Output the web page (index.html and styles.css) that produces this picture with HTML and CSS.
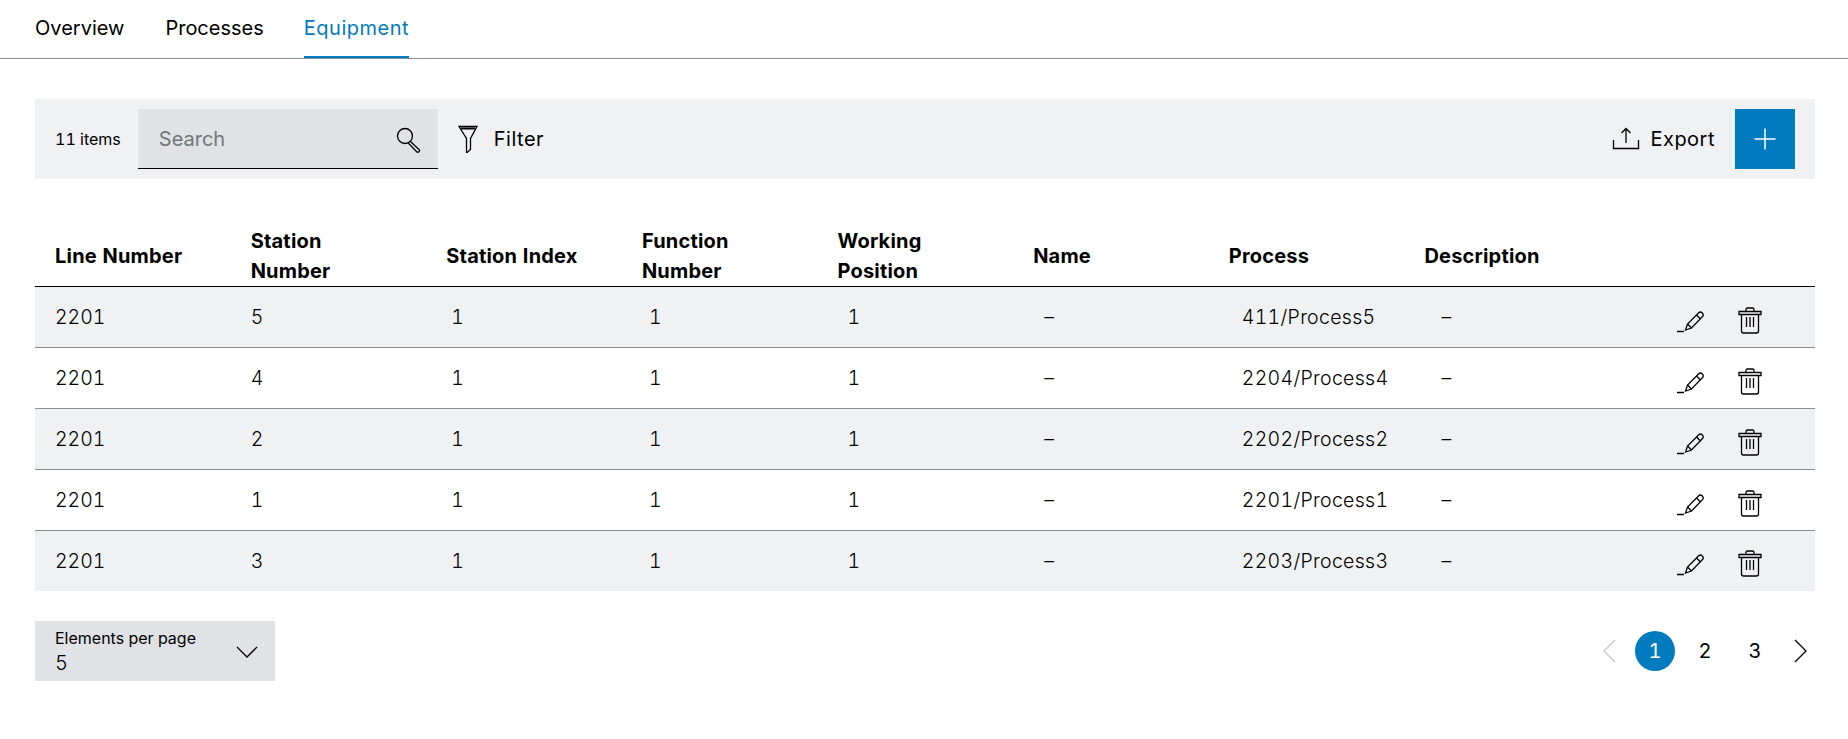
FILE: index.html
```html
<!DOCTYPE html>
<html lang="en">

<head>
    <meta charset="UTF-8">
    <meta name="viewport" content="width=device-width, initial-scale=1.0">
    <title>Equipment</title>
    <link rel="stylesheet" href="styles.css">
</head>

<body>
    <svg class="sprite">
        <symbol id="i-edit" viewBox="0 0 28 28"><path d="M1 25.500h7M9.500 24l2-6L22.500 7a2.300 2.300 0 0 1 3.800 3.800L15.500 22z"/><path d="M11.500 18l4 4M20.500 9l4 4"/></symbol>
        <symbol id="i-trash" viewBox="0 0 28 28"><path d="M3 5.500h22v3H3zM5.500 8.500V25a2 2 0 0 0 2 2h13a2 2 0 0 0 2-2V8.500M10 5.500V3.500a1.500 1.500 0 0 1 1.500-1.500h5a1.500 1.500 0 0 1 1.500 1.500v2M10.500 11v10M14 11v10M17.500 11v10"/></symbol>
    </svg>

    <nav class="tabs">
        <a class="tab">Overview</a>
        <a class="tab">Processes</a>
        <a class="tab tab-active">Equipment</a>
    </nav>

    <div class="content">
        <div class="toolbar">
            <span class="item-count">11 items</span>
            <div class="search">
                <span class="search-placeholder">Search</span>
                <svg class="icon" viewBox="0 0 28 28"><circle cx="11" cy="11" r="7.500"/><path d="M16.500 16.500l9 8.500a1.800 1.800 0 0 1-2.600 2l-8.700-9"/></svg>
            </div>
            <button class="tool-btn">
                <svg class="icon" viewBox="0 0 28 28"><path d="M5 1.500h18l-6.500 12v11l-4 3.500v-14.500z"/><path d="M7 3.500h14" stroke-width="2"/></svg>
                Filter
            </button>
            <button class="tool-btn tool-btn-right">
                <svg class="icon" viewBox="0 0 28 28"><path d="M1.500 15v8.500h25v-8.500"/><path d="M14 18v-14M9.500 8l4.500-4.500 4.500 4.500"/></svg>
                Export
            </button>
            <button class="add-btn">
                <svg class="icon icon-white" viewBox="0 0 28 28"><path d="M14 3.500v21M3.500 14h21"/></svg>
            </button>
        </div>

        <table class="equipment">
            <thead>
                <tr>
                    <th>Line Number</th>
                    <th>Station Number</th>
                    <th>Station Index</th>
                    <th>Function Number</th>
                    <th>Working Position</th>
                    <th>Name</th>
                    <th>Process</th>
                    <th>Description</th>
                    <th></th>
                </tr>
            </thead>
            <tbody>
                <tr>
                    <td>2201</td><td>5</td><td>1</td><td>1</td><td>1</td>
                    <td>–</td><td>411/Process5</td><td>–</td>
                    <td class="actions">
                        <svg class="icon"><use href="#i-edit"/></svg>
                        <svg class="icon"><use href="#i-trash"/></svg>
                    </td>
                </tr>
                <tr>
                    <td>2201</td><td>4</td><td>1</td><td>1</td><td>1</td>
                    <td>–</td><td>2204/Process4</td><td>–</td>
                    <td class="actions">
                        <svg class="icon"><use href="#i-edit"/></svg>
                        <svg class="icon"><use href="#i-trash"/></svg>
                    </td>
                </tr>
                <tr>
                    <td>2201</td><td>2</td><td>1</td><td>1</td><td>1</td>
                    <td>–</td><td>2202/Process2</td><td>–</td>
                    <td class="actions">
                        <svg class="icon"><use href="#i-edit"/></svg>
                        <svg class="icon"><use href="#i-trash"/></svg>
                    </td>
                </tr>
                <tr>
                    <td>2201</td><td>1</td><td>1</td><td>1</td><td>1</td>
                    <td>–</td><td>2201/Process1</td><td>–</td>
                    <td class="actions">
                        <svg class="icon"><use href="#i-edit"/></svg>
                        <svg class="icon"><use href="#i-trash"/></svg>
                    </td>
                </tr>
                <tr>
                    <td>2201</td><td>3</td><td>1</td><td>1</td><td>1</td>
                    <td>–</td><td>2203/Process3</td><td>–</td>
                    <td class="actions">
                        <svg class="icon"><use href="#i-edit"/></svg>
                        <svg class="icon"><use href="#i-trash"/></svg>
                    </td>
                </tr>
            </tbody>
        </table>

        <div class="footer">
            <div class="page-size">
                <div>
                    <div class="page-size-label">Elements per page</div>
                    <div class="page-size-value">5</div>
                </div>
                <svg class="icon" viewBox="0 0 28 28"><path d="M4 9l10 10 10-10"/></svg>
            </div>
            <div class="pagination">
                <svg class="icon icon-disabled" viewBox="0 0 28 28"><path d="M18 3L7 14l11 11"/></svg>
                <span class="page page-current">1</span>
                <span class="page">2</span>
                <span class="page">3</span>
                <svg class="icon" viewBox="0 0 28 28"><path d="M10 3l11 11-11 11"/></svg>
            </div>
        </div>
    </div>
</body>

</html>
```

FILE: styles.css
```css
body {
    font-family: Inter, "Liberation Sans", sans-serif;
    font-size: 20px;
    font-variant-numeric: tabular-nums;
    color: #000;
    background-color: #fff;
    margin: 0;
}

.sprite {
    display: none;
}

.icon {
    width: 28px;
    height: 28px;
    fill: none;
    stroke: #000;
    stroke-width: 1.300;
    flex-shrink: 0;
}

.icon-white {
    stroke: #fff;
    stroke-width: 1.500;
}

.icon-disabled {
    stroke: #c1c7cc;
}

.tabs {
    display: flex;
    gap: 41px;
    height: 58px;
    padding: 0 35px;
    border-bottom: 1px solid #8a9097;
}

.tab {
    box-sizing: border-box;
    height: 58px;
    line-height: 56px;
}

.tab-active {
    margin-left: -1px;
    letter-spacing: 0.5px;
    color: #007bc0;
    border-bottom: 2px solid #007bc0;
}

.content {
    padding: 40px 33px 0 35px;
}

.toolbar {
    display: flex;
    align-items: center;
    height: 80px;
    padding: 0 20px;
    background-color: #eff1f2;
}

.item-count {
    font-size: 16px;
    margin-right: 17px;
}

.search {
    display: flex;
    align-items: center;
    justify-content: space-between;
    box-sizing: border-box;
    width: 300px;
    height: 60px;
    padding: 0 16px 0 21px;
    background-color: #e0e2e5;
    border-bottom: 1px solid #000;
}

.search-placeholder {
    color: #71767c;
}

.tool-btn {
    display: flex;
    align-items: center;
    gap: 12px;
    margin-left: 16px;
    padding: 0;
    border: none;
    background: none;
    font: inherit;
    letter-spacing: 0.5px;
    color: inherit;
}

.tool-btn-right {
    gap: 10px;
    margin-left: auto;
}

.add-btn {
    display: flex;
    align-items: center;
    justify-content: center;
    width: 60px;
    height: 60px;
    margin-left: 20px;
    padding: 0;
    border: none;
    background-color: #007bc0;
}

.equipment {
    width: 100%;
    table-layout: fixed;
    border-collapse: collapse;
    margin-top: 40px;
}

.equipment th {
    box-sizing: border-box;
    padding: 7px 30px 0 20px;
    height: 67px;
    text-align: left;
    font-weight: 700;
    letter-spacing: 0.2px;
    line-height: 30px;
    border-bottom: 1px solid #000;
}

.equipment th:last-child {
    width: 215px;
}

.equipment td {
    box-sizing: border-box;
    padding: 0 20px;
    height: 61px;
    font-size: 19.500px;
    font-weight: 350;
    border-bottom: 1px solid #8a9097;
}

.equipment tbody tr:nth-child(odd) {
    background-color: #eff1f2;
}

.equipment tbody tr:last-child td {
    height: 60px;
    border-bottom: none;
}

.equipment td:nth-child(3) {
    padding-left: 25px;
}

.equipment td:nth-child(4) {
    padding-left: 27px;
}

.equipment td:nth-child(5) {
    padding-left: 30px;
}

.equipment td:nth-child(6) {
    padding-left: 31px;
}

.equipment td:nth-child(7) {
    padding-left: 33px;
    letter-spacing: 0.3px;
}

.equipment td:nth-child(8) {
    padding-left: 37px;
}

.equipment .actions {
    padding: 5px 51px 0 0;
    text-align: right;
}

.actions .icon {
    display: inline-block;
    margin-left: 27px;
    vertical-align: middle;
}

.footer {
    display: flex;
    align-items: center;
    justify-content: space-between;
    margin-top: 30px;
}

.page-size {
    display: flex;
    align-items: center;
    justify-content: space-between;
    box-sizing: border-box;
    width: 240px;
    height: 60px;
    padding: 2px 14px 0 20px;
    background-color: #e0e2e5;
}

.page-size-label {
    font-size: 16px;
    line-height: 22px;
}

.page-size-value {
    line-height: 28px;
    font-weight: 350;
}

.pagination {
    display: flex;
    align-items: center;
    gap: 10px;
    padding-right: 2px;
}

.page {
    width: 40px;
    height: 40px;
    line-height: 40px;
    text-align: center;
    border-radius: 50%;
}

.page-current {
    color: #fff;
    background-color: #007bc0;
}
```
